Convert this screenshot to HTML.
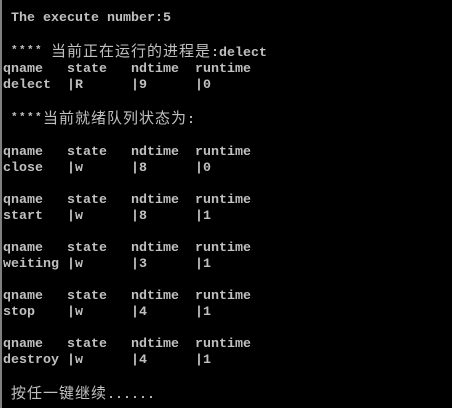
<!DOCTYPE html>
<html><head><meta charset="utf-8"><style>
html,body{margin:0;padding:0;background:#000;width:452px;height:408px;overflow:hidden}
.b{position:absolute;left:0;top:0;width:2px;height:408px;background:#808080}
pre{position:absolute;left:3px;top:11px;margin:0;color:#c0c0c0;font-family:"Liberation Mono",monospace;font-size:13.33px;line-height:16px;font-weight:bold;white-space:pre}
.c{font-family:"Noto Sans CJK SC","WenQuanYi Zen Hei",sans-serif;font-weight:normal;font-size:15px;letter-spacing:1px}
.s{display:inline-block;width:32px;font-size:11px;letter-spacing:1.4px;vertical-align:top}
</style></head><body><div class="b"></div><pre> The execute number:5

 <span class="s">****</span> <span class="c">当前正在运行的进程是</span>:delect
qname   state   ndtime  runtime
delect  |R      |9      |0

 <span class="s">****</span><span class="c">当前就绪队列状态为</span>:

qname   state   ndtime  runtime
close   |w      |8      |0

qname   state   ndtime  runtime
start   |w      |8      |1

qname   state   ndtime  runtime
weiting |w      |3      |1

qname   state   ndtime  runtime
stop    |w      |4      |1

qname   state   ndtime  runtime
destroy |w      |4      |1

 <span class="c">按任一键继续</span>......</pre></body></html>
